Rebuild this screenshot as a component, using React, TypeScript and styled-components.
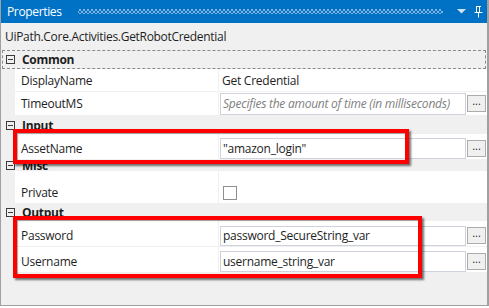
import React from "react";
import styled, { createGlobalStyle } from "styled-components";

const GlobalStyle = createGlobalStyle`
    html, body {
        margin: 0;
        padding: 0;
        background: #ffffff;
    }
    body {
        font-family: "Open Sans", "Noto Sans", sans-serif;
        font-size: 12px;
        color: #1e1e1e;
    }
`;

const PanelCSS = styled.div`
    position: relative;
    width: 489px;
    height: 306px;
    box-sizing: border-box;
    background: #f0f0f0;
    border-right: 2px solid #a0a0a0;
    border-bottom: 1px solid #a0a0a0;
    border-left: 1px solid #a0a0a0;
    display: flex;
    flex-direction: column;
    overflow: hidden;
`;

const TitleBarCSS = styled.div`
    height: 23px;
    margin: 0 -2px 0 -1px;
    background: #0072c6;
    display: flex;
    align-items: center;
    padding: 0 6px 0 7px;
    gap: 8px;
    color: #ffffff;
    font-size: 12px;
    flex-shrink: 0;
`;

const TitleText = styled.span`
    letter-spacing: -0.35px;
`;

const Grip = styled.div`
    flex: 1;
    height: 5px;
    margin: 0 6px 0 8px;
    background-image: radial-gradient(circle, #7fb4e2 0.8px, transparent 1px),
        radial-gradient(circle, #7fb4e2 0.8px, transparent 1px);
    background-size: 4px 4px;
    background-position: 0 -1px, 2px 1px;
`;

const DescriptionCSS = styled.div`
    height: 27px;
    display: flex;
    align-items: center;
    padding-left: 4px;
    letter-spacing: -0.3px;
    flex-shrink: 0;
`;

const GridCSS = styled.div`
    display: flex;
    flex-direction: column;
`;

const CategoryCSS = styled.div<{ $h: number; $focused?: boolean }>`
    height: ${(p) => p.$h}px;
    box-sizing: border-box;
    display: flex;
    align-items: center;
    gap: 7px;
    padding-left: 3px;
    margin: 0 1px;
    font-weight: 700;
    letter-spacing: -0.3px;
    border: 1px dashed ${(p) => (p.$focused ? "#8a8a8a" : "transparent")};
`;

const MinusBox = styled.span`
    width: 7px;
    height: 7px;
    border: 1px solid #3c3c3c;
    position: relative;
    flex-shrink: 0;

    &::after {
        content: "";
        position: absolute;
        left: 1px;
        right: 1px;
        top: 3px;
        height: 1px;
        background: #3c3c3c;
    }
`;

const RowCSS = styled.div<{ $h: number }>`
    height: ${(p) => p.$h}px;
    margin-left: 14px;
    display: grid;
    grid-template-columns: 203px 1fr;
    column-gap: 1px;
    border-bottom: 1px solid #f0f0f0;
    box-sizing: border-box;
`;

const NameCell = styled.div<{ $pt?: number }>`
    background: #ffffff;
    display: flex;
    align-items: center;
    padding-left: 6px;
    padding-top: ${(p) => p.$pt ?? 0}px;
    letter-spacing: -0.25px;
`;

const ValueCell = styled.div<{ $pt?: number }>`
    background: #ffffff;
    display: flex;
    align-items: center;
    gap: 1px;
    padding: ${(p) => p.$pt ?? 0}px 2px 0 1px;
`;

const PlainValue = styled.span`
    padding-left: 2px;
    letter-spacing: -0.25px;
`;

const EditorBox = styled.div<{ $placeholder?: boolean }>`
    width: 246px;
    height: calc(100% - 1px);
    box-sizing: border-box;
    border: 1px solid #cdd2dc;
    background: #ffffff;
    display: flex;
    align-items: center;
    padding-left: 2px;
    white-space: nowrap;
    overflow: hidden;
    letter-spacing: -0.25px;
    color: ${(p) => (p.$placeholder ? "#808080" : "#1e1e1e")};
    font-style: ${(p) => (p.$placeholder ? "italic" : "normal")};
`;

const DotsButton = styled.button`
    width: 19px;
    height: 17px;
    padding: 0 0 5px;
    margin: 0;
    box-sizing: border-box;
    border: 1px solid #acacac;
    background: #f0f0f0;
    font-family: inherit;
    font-size: 11px;
    line-height: 1;
    color: #1e1e1e;
    display: flex;
    align-items: flex-end;
    justify-content: center;
`;

const CheckBox = styled.span`
    width: 12px;
    height: 12px;
    margin-left: 3px;
    border: 1px solid #8e8f8f;
    background: #ffffff;
`;

const Highlight = styled.div<{ $x: number; $y: number; $w: number; $h: number }>`
    position: absolute;
    left: ${(p) => p.$x}px;
    top: ${(p) => p.$y}px;
    width: ${(p) => p.$w}px;
    height: ${(p) => p.$h}px;
    box-sizing: border-box;
    border: 4px solid #ff0000;
    box-shadow: 2px 2px 2px rgba(0, 0, 0, 0.55), inset 1px 1px 1px rgba(0, 0, 0, 0.35);
    pointer-events: none;
`;

const Category: React.FC<{ title: string; h: number; focused?: boolean }> = ({ title, h, focused }) => (
    <CategoryCSS $h={h} $focused={focused}>
        <MinusBox />
        {title}
    </CategoryCSS>
);

interface RowProps {
    name: string;
    h: number;
    pt?: number;
    children?: React.ReactNode;
}

const Row: React.FC<RowProps> = ({ name, h, pt, children }) => (
    <RowCSS $h={h}>
        <NameCell $pt={pt}>{name}</NameCell>
        <ValueCell $pt={pt}>{children}</ValueCell>
    </RowCSS>
);

const Editor: React.FC<{ value: string; placeholder?: boolean }> = ({ value, placeholder }) => (
    <>
        <EditorBox $placeholder={placeholder}>{value}</EditorBox>
        <DotsButton>...</DotsButton>
    </>
);

const App: React.FC = () => {
    return (
        <>
            <GlobalStyle />
            <PanelCSS>
                <TitleBarCSS>
                    <TitleText>Properties</TitleText>
                    <Grip />
                    <svg width="9" height="5" viewBox="0 0 9 5">
                        <path d="M0 0h9L4.5 4.5z" fill="#cfe3f5" />
                    </svg>
                    <svg width="9" height="12" viewBox="0 0 9 12">
                        <path d="M2 0.5h5M2.5 0.5v6M5.5 0.5v6M0.5 6.5h8M4.5 6.5v5" stroke="#ffffff" strokeWidth="1" fill="none" />
                    </svg>
                </TitleBarCSS>
                <DescriptionCSS>UiPath.Core.Activities.GetRobotCredential</DescriptionCSS>
                <GridCSS>
                    <Category title="Common" h={19} focused />
                    <Row name="DisplayName" h={23}>
                        <PlainValue>Get Credential</PlainValue>
                    </Row>
                    <Row name="TimeoutMS" h={24}>
                        <Editor value="Specifies the amount of time (in milliseconds)" placeholder />
                    </Row>
                    <Category title="Input" h={18} />
                    <Row name="AssetName" h={26} pt={3}>
                        <Editor value={'"amazon_login"'} />
                    </Row>
                    <Category title="Misc" h={11} />
                    <Row name="Private" h={33} pt={11}>
                        <CheckBox />
                    </Row>
                    <Category title="Output" h={17} />
                    <Row name="Password" h={26} pt={4}>
                        <Editor value="password_SecureString_var" />
                    </Row>
                    <Row name="Username" h={26} pt={3}>
                        <Editor value="username_string_var" />
                    </Row>
                </GridCSS>
                <Highlight $x={12} $y={129} $w={396} $h={35} />
                <Highlight $x={12} $y={216} $w={409} $h={62} />
            </PanelCSS>
        </>
    );
};

export default App;
